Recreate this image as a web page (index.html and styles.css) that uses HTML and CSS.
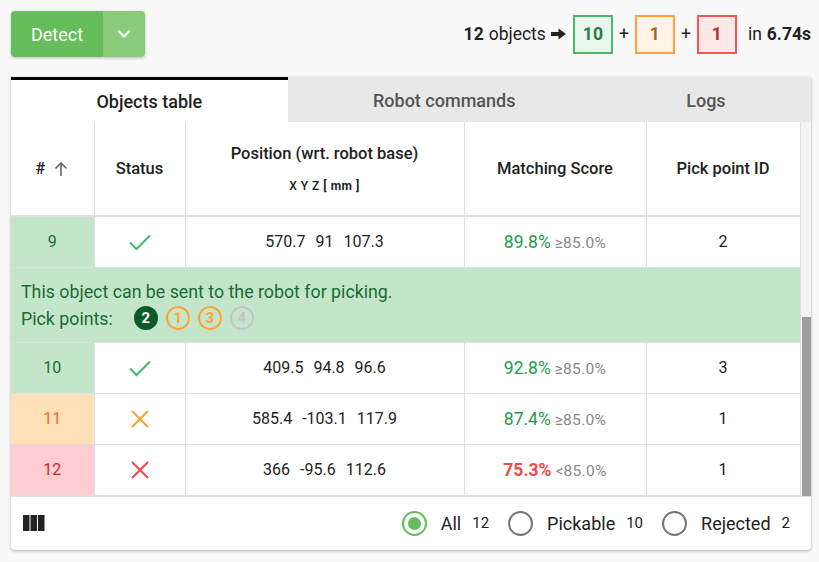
FILE: index.html
```html
<!DOCTYPE html>
<html>
<head>
<meta charset="utf-8">
<link rel="stylesheet" href="styles.css">
</head>
<body>
<div class="page">
  <div class="topbar">
    <div class="split-btn">
      <button class="btn-main">Detect</button>
      <button class="btn-drop">
        <svg width="16" height="16" viewBox="0 0 16 16"><path d="M3 5.5 L8 10.5 L13 5.5" fill="none" stroke="#fff" stroke-width="2.2" stroke-linecap="round" stroke-linejoin="round"/></svg>
      </button>
    </div>
    <div class="summary">
      <b>12</b><span class="sp">objects</span>
      <svg class="arrow" width="15" height="12" viewBox="0 0 15 12"><path d="M0 4 H7.5 V0.5 L15 6 L7.5 11.5 V8 H0 Z" fill="#222"/></svg>
      <span class="box box-green">10</span>
      <span class="plus">+</span>
      <span class="box box-orange">1</span>
      <span class="plus">+</span>
      <span class="box box-red">1</span>
      <span class="in">in</span><b>6.74s</b>
    </div>
  </div>

  <div class="card">
    <div class="tabs">
      <div class="tab active">Objects table</div>
      <div class="tab">Robot commands</div>
      <div class="tab">Logs</div>
    </div>
    <div class="table-wrap">
      <table class="grid">
        <colgroup>
          <col class="c1"><col class="c2"><col class="c3"><col class="c4"><col class="c5">
        </colgroup>
        <thead>
          <tr>
            <th><span class="hash">#</span><svg class="sort" width="16" height="16" viewBox="0 0 16 16"><path d="M8 15 V2 M2.5 7.5 L8 2 L13.5 7.5" fill="none" stroke="#666" stroke-width="1.6"/></svg></th>
            <th>Status</th>
            <th><div>Position (wrt. robot base)</div><div class="unit">X Y Z <b>[ mm ]</b></div></th>
            <th>Matching Score</th>
            <th>Pick point ID</th>
          </tr>
        </thead>
        <tbody>
          <tr>
            <td class="id ok">9</td>
            <td><svg class="ico" width="24" height="24" viewBox="0 0 24 24"><path d="M2 12.5 L8.5 19 L22 5.5" fill="none" stroke="#3dba6a" stroke-width="2"/></svg></td>
            <td class="pos"><span>570.7</span><span>91</span><span>107.3</span></td>
            <td><span class="score good">89.8%</span> <span class="thr">≥85.0%</span></td>
            <td>2</td>
          </tr>
          <tr class="detail">
            <td colspan="5">
              <div class="msg">This object can be sent to the robot for picking.</div>
              <div class="pp">Pick points:
                <span class="pts">
                  <span class="pt pt-sel">2</span>
                  <span class="pt pt-o">1</span>
                  <span class="pt pt-o">3</span>
                  <span class="pt pt-g">4</span>
                </span>
              </div>
            </td>
          </tr>
          <tr>
            <td class="id ok">10</td>
            <td><svg class="ico" width="24" height="24" viewBox="0 0 24 24"><path d="M2 12.5 L8.5 19 L22 5.5" fill="none" stroke="#3dba6a" stroke-width="2"/></svg></td>
            <td class="pos"><span>409.5</span><span>94.8</span><span>96.6</span></td>
            <td><span class="score good">92.8%</span> <span class="thr">≥85.0%</span></td>
            <td>3</td>
          </tr>
          <tr>
            <td class="id warn">11</td>
            <td><svg class="ico" width="24" height="24" viewBox="0 0 24 24"><path d="M4 4 L20 20 M20 4 L4 20" fill="none" stroke="#ffa034" stroke-width="2"/></svg></td>
            <td class="pos"><span>585.4</span><span>-103.1</span><span>117.9</span></td>
            <td><span class="score good">87.4%</span> <span class="thr">≥85.0%</span></td>
            <td>1</td>
          </tr>
          <tr>
            <td class="id bad">12</td>
            <td><svg class="ico" width="24" height="24" viewBox="0 0 24 24"><path d="M4 4 L20 20 M20 4 L4 20" fill="none" stroke="#f44848" stroke-width="2"/></svg></td>
            <td class="pos"><span>366</span><span>-95.6</span><span>112.6</span></td>
            <td><span class="score poor">75.3%</span> <span class="thr">&lt;85.0%</span></td>
            <td>1</td>
          </tr>
        </tbody>
      </table>
      <div class="scrollbar"><div class="thumb"></div></div>
    </div>
    <div class="footer">
      <svg class="cols" width="22" height="16" viewBox="0 0 22 16"><rect x="0" y="0" width="6.5" height="16" fill="#222"/><rect x="7.5" y="0" width="6.5" height="16" fill="#222"/><rect x="15" y="0" width="6.5" height="16" fill="#222"/></svg>
      <div class="filters">
        <label class="radio"><span class="dot on"></span><span class="lbl">All</span><span class="cnt">12</span></label>
        <label class="radio"><span class="dot"></span><span class="lbl">Pickable</span><span class="cnt">10</span></label>
        <label class="radio"><span class="dot"></span><span class="lbl">Rejected</span><span class="cnt">2</span></label>
      </div>
    </div>
  </div>
</div>
</body>
</html>
```
FILE: styles.css
```css
* { box-sizing: border-box; }
html, body { margin: 0; padding: 0; }
body {
  background: #f8f8f8;
  font-family: Roboto, "Liberation Sans", sans-serif;
  color: #222;
}
.page { padding: 11px 8px 11px 11px; width: 819px; }

.topbar {
  display: flex;
  justify-content: space-between;
  align-items: center;
  height: 46px;
}
.split-btn {
  display: flex;
  height: 46px;
  border-radius: 4px;
  overflow: hidden;
  box-shadow: 0 1px 3px rgba(0,0,0,0.25);
}
.split-btn button {
  border: 0;
  margin: 0;
  padding: 0;
  font-family: inherit;
  color: #fff;
  display: flex;
  align-items: center;
  justify-content: center;
}
.btn-main {
  width: 92px;
  background: #66bd5b;
  font-size: 18px;
}
.btn-drop {
  width: 42px;
  background: #88cb7b;
}

.summary {
  display: flex;
  align-items: center;
  font-size: 17.5px;
  color: #222;
}
.summary b { font-weight: 700; }
.summary .sp { margin-left: 5px; }
.arrow { margin: 0 7px 0 5px; }
.box {
  width: 40px;
  height: 39px;
  border: 2px solid;
  display: flex;
  align-items: center;
  justify-content: center;
  font-weight: 700;
}
.box-green { border-color: #4db86b; background: #e9f5eb; color: #2c7a45; }
.box-orange { border-color: #ffa23c; background: #fff2e7; color: #a8661f; }
.box-red { border-color: #f55555; background: #fde7e7; color: #a63434; }
.plus { width: 22px; text-align: center; }
.in { margin: 0 5px 0 11px; }

.card {
  margin-top: 20px;
  width: 800px;
  background: #fff;
  border-radius: 0 0 4px 4px;
  box-shadow: 0 1px 3px rgba(0,0,0,0.3);
}
.tabs {
  display: flex;
  height: 45px;
  background: #e8e8e8;
}
.tab {
  flex: 1 1 auto;
  display: flex;
  align-items: center;
  justify-content: center;
  font-size: 18px;
  font-weight: 500;
  color: #555;
  padding-top: 1px;
}
.tab.active {
  background: #fff;
  color: #222;
  border-top: 3px solid #000;
  padding-top: 0;
}

.table-wrap {
  display: flex;
  align-items: stretch;
}
.grid {
  width: 789px;
  border-collapse: collapse;
  table-layout: fixed;
  font-size: 16px;
}
.c1 { width: 83px; }
.c2 { width: 91px; }
.c3 { width: 279px; }
.c4 { width: 182px; }
.c5 { width: 154px; }
.grid th, .grid td {
  border: 1px solid #dedede;
  text-align: center;
  padding: 0;
}
.grid tr > :first-child { border-left: 0; }
.grid th {
  height: 94px;
  font-size: 16.5px;
  font-weight: 500;
  color: #222;
  border-top: 0;
  border-bottom: 2px solid #dedede;
}
.hash { margin-right: 8px; }
.sort { vertical-align: -3px; }
.unit { font-size: 12px; margin-top: 16px; letter-spacing: 0.5px; }
.unit b { font-weight: 700; }
.grid td { height: 51px; color: #222; }
.ico { display: block; margin: 0 auto; }
.id.ok { background: #c3e6cb; color: #1b6b33; }
.id.warn { background: #ffe0b9; color: #f06a2a; }
.id.bad { background: #ffccd2; color: #d42232; }
.pos span { margin: 0 5px; }
.score { font-size: 17.5px; }
.score.good { color: #1f9a4b; }
.score.poor { color: #f44848; font-weight: 700; }
.thr { color: #888; font-size: 15.5px; letter-spacing: 0.3px; }

.detail td {
  height: 75px;
  background: #c3e6cb;
  color: #1b6b33;
  text-align: left;
  padding: 10px 10px 10px 10px;
  font-size: 17.8px;
  line-height: 27px;
}
.pp { display: flex; align-items: center; }
.pts { display: flex; gap: 8px; margin-left: 21px; }
.pt {
  width: 24px;
  height: 24px;
  border-radius: 50%;
  border: 2px solid;
  display: flex;
  align-items: center;
  justify-content: center;
  font-size: 15px;
  font-weight: 700;
  line-height: 1;
}
.pt-sel { background: #0c5a2a; border-color: #0c5a2a; color: #fff; }
.pt-o { border-color: #ffa23c; color: #ffa23c; }
.pt-g { border-color: #c4c4c4; color: #c4c4c4; }

.scrollbar {
  width: 11px;
  background: #f3f3f3;
  display: flex;
  flex-direction: column;
  justify-content: flex-end;
  padding-left: 1px;
}
.thumb { height: 179px; background: #9e9e9e; }

.footer {
  height: 54px;
  display: flex;
  align-items: center;
  justify-content: space-between;
  padding: 0 21px 0 12px;
  border-top: 1px solid #dedede;
}
.cols { display: block; }
.filters { display: flex; align-items: center; }
.radio { display: flex; align-items: center; margin-left: 19px; }
.radio:first-child { margin-left: 0; }
.dot {
  width: 25px;
  height: 25px;
  border-radius: 50%;
  border: 2px solid #757575;
  display: flex;
  align-items: center;
  justify-content: center;
}
.dot.on { border-color: #66bd5b; }
.dot.on::after {
  content: "";
  width: 13px;
  height: 13px;
  border-radius: 50%;
  background: #66bd5b;
}
.lbl { font-size: 18px; margin-left: 14px; color: #222; }
.cnt { font-size: 15px; margin-left: 11px; color: #222; }
```
